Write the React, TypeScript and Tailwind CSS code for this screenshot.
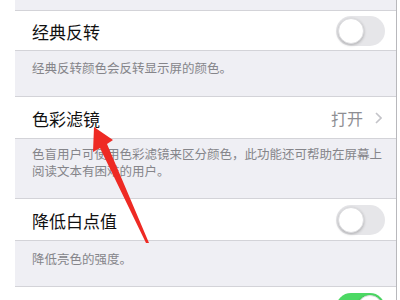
import React from 'react';

const Toggle: React.FC<{ on?: boolean }> = ({ on = false }) => (
  <div
    className={`w-[49px] h-[30px] rounded-full p-[2px] flex items-center ${
      on ? 'bg-[#4cd964] justify-end' : 'bg-[#e6e6e9] justify-start'
    }`}
  >
    <div className="w-[26px] h-[26px] rounded-full bg-white shadow-[0_1px_3px_rgba(0,0,0,0.25)] border border-[#dcdcdf]" />
  </div>
);

const Row: React.FC<{ title: string; h: string; children?: React.ReactNode }> = ({ title, h, children }) => (
  <div className={`${h} shrink-0 bg-white border-y border-[#d3d3d8] flex items-center justify-between pl-[17px] pr-[11px]`}>
    <span className="text-[17px] leading-[20px] pt-[2px] text-[#111]">{title}</span>
    {children}
  </div>
);

const Note: React.FC<{ h: string; pt: string; children: React.ReactNode }> = ({ h, pt, children }) => (
  <div className={`${h} ${pt} shrink-0 pl-[17px] pr-[10px] text-[12.5px] leading-[17px] text-[#85858a]`}>
    {children}
  </div>
);

export default function App() {
  return (
    <div
      className="relative w-[400px] h-[300px] overflow-hidden bg-white flex"
      style={{ fontFamily: '"Noto Sans CJK SC", "Noto Sans", sans-serif' }}
    >
      <div className="ml-[15px] w-[382px] h-full bg-[#efeff4] border-r border-[#b8b8bc] flex flex-col">
        <div className="h-[10px] shrink-0" />
        <Row title="经典反转" h="h-[41px]">
          <Toggle />
        </Row>
        <Note h="h-[45px]" pt="pt-[8px]">经典反转颜色会反转显示屏的颜色。</Note>
        <Row title="色彩滤镜" h="h-[43px]">
          <div className="flex items-center gap-[12px] pr-[3px]">
            <span className="text-[16px] text-[#8e8e93]">打开</span>
            <svg width="7" height="12" viewBox="0 0 7 12">
              <polyline points="1,1 6,6 1,11" fill="none" stroke="#c4c4c9" strokeWidth="1.6" />
            </svg>
          </div>
        </Row>
        <Note h="h-[59px]" pt="pt-[6px]">
          色盲用户可使用色彩滤镜来区分颜色，此功能还可帮助在屏幕上阅读文本有困难的用户。
        </Note>
        <Row title="降低白点值" h="h-[43px]">
          <Toggle />
        </Row>
        <Note h="h-[45px]" pt="pt-[9px]">降低亮色的强度。</Note>
        <Row title="自动亮度调节" h="h-[43px]">
          <Toggle on />
        </Row>
      </div>
      <svg className="absolute left-0 top-0" width="400" height="300" viewBox="0 0 400 300">
        <polygon
          points="94,127 113,140 107,144 149,243 146,243 100,148 93,152"
          fill="#ee2a24"
        />
      </svg>
    </div>
  );
}
